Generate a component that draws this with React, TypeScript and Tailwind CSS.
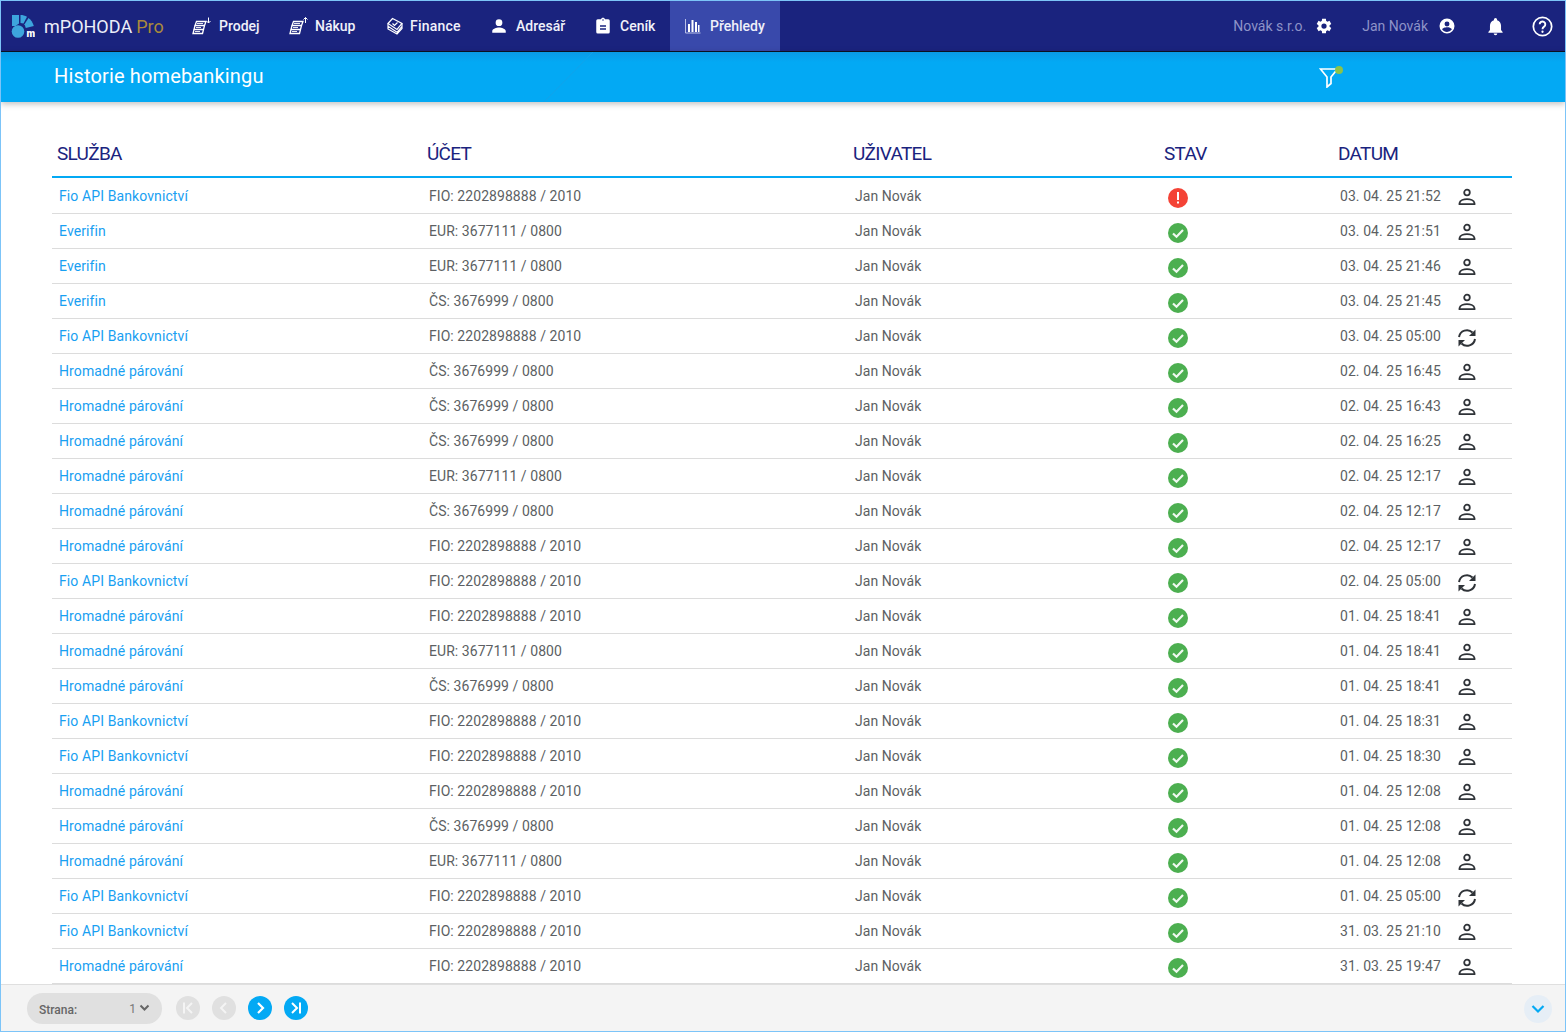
import React from "react";

type Row = [string, string, string, string];
const rows: Row[] = [
  ["Fio API Bankovnictví", "FIO: 2202898888 / 2010", "03. 04. 25 21:52", "eu"],
  ["Everifin", "EUR: 3677111 / 0800", "03. 04. 25 21:51", "ou"],
  ["Everifin", "EUR: 3677111 / 0800", "03. 04. 25 21:46", "ou"],
  ["Everifin", "ČS: 3676999 / 0800", "03. 04. 25 21:45", "ou"],
  ["Fio API Bankovnictví", "FIO: 2202898888 / 2010", "03. 04. 25 05:00", "os"],
  ["Hromadné párování", "ČS: 3676999 / 0800", "02. 04. 25 16:45", "ou"],
  ["Hromadné párování", "ČS: 3676999 / 0800", "02. 04. 25 16:43", "ou"],
  ["Hromadné párování", "ČS: 3676999 / 0800", "02. 04. 25 16:25", "ou"],
  ["Hromadné párování", "EUR: 3677111 / 0800", "02. 04. 25 12:17", "ou"],
  ["Hromadné párování", "ČS: 3676999 / 0800", "02. 04. 25 12:17", "ou"],
  ["Hromadné párování", "FIO: 2202898888 / 2010", "02. 04. 25 12:17", "ou"],
  ["Fio API Bankovnictví", "FIO: 2202898888 / 2010", "02. 04. 25 05:00", "os"],
  ["Hromadné párování", "FIO: 2202898888 / 2010", "01. 04. 25 18:41", "ou"],
  ["Hromadné párování", "EUR: 3677111 / 0800", "01. 04. 25 18:41", "ou"],
  ["Hromadné párování", "ČS: 3676999 / 0800", "01. 04. 25 18:41", "ou"],
  ["Fio API Bankovnictví", "FIO: 2202898888 / 2010", "01. 04. 25 18:31", "ou"],
  ["Fio API Bankovnictví", "FIO: 2202898888 / 2010", "01. 04. 25 18:30", "ou"],
  ["Hromadné párování", "FIO: 2202898888 / 2010", "01. 04. 25 12:08", "ou"],
  ["Hromadné párování", "ČS: 3676999 / 0800", "01. 04. 25 12:08", "ou"],
  ["Hromadné párování", "EUR: 3677111 / 0800", "01. 04. 25 12:08", "ou"],
  ["Fio API Bankovnictví", "FIO: 2202898888 / 2010", "01. 04. 25 05:00", "os"],
  ["Fio API Bankovnictví", "FIO: 2202898888 / 2010", "31. 03. 25 21:10", "ou"],
  ["Hromadné párování", "FIO: 2202898888 / 2010", "31. 03. 25 19:47", "ou"],
];

const Stack = ({ up }: { up?: boolean }) => (
  <svg width="22" height="22" viewBox="0 0 22 22" fill="none" stroke="#fff" strokeWidth="1.300">
    <path d="M4.500 6.500h9.500l-1.500 4H3zM3 10.500l-1 4h9.500l1-4M2 14.500l-1 4h9.500l1-4" />
    <path d="M5 8.500h6M4 12.500h5M3 16.500h5" strokeWidth=".9" />
    {up ? <path d="M16.500 8V2.500M14.500 4.500l2-2 2 2" strokeWidth="1" /> : <path d="M16.500 2.500V8M14.500 6l2 2 2-2" strokeWidth="1" />}
  </svg>
);

const Gem = () => (
  <svg width="16" height="18" viewBox="0 0 16 18" fill="none" stroke="#fff" strokeWidth="1.200">
    <path d="M1 6.500 5.500 1.500 15 6.500 10 12.500z" />
    <path d="M1 6.500v2.800l9 6 5-6V6.500M1 9.300V12l9 5 5-5.500V9.300" />
    <path d="m5.500 6.500 2 2 3-3" />
  </svg>
);

const Person = () => (
  <svg width="18" height="18" viewBox="0 0 24 24" fill="#fff"><path d="M12 12a4.500 4.500 0 1 0 0-9 4.500 4.500 0 0 0 0 9zm0 2c-3.200 0-9 1.600-9 4.800V21h18v-2.200c0-3.200-5.800-4.800-9-4.800z" /></svg>
);
const Clip = () => (
  <svg width="18" height="18" viewBox="0 0 24 24" fill="#fff"><path d="M19 3h-4.200C14.400 1.800 13.300 1 12 1s-2.400.8-2.800 2H5a2 2 0 0 0-2 2v15a2 2 0 0 0 2 2h14a2 2 0 0 0 2-2V5a2 2 0 0 0-2-2zm-7 0a1 1 0 1 1 0 2 1 1 0 0 1 0-2zm4 14H8v-2h8zm0-4H8v-2h8z" /></svg>
);
const Bars = () => (
  <svg width="16" height="16" viewBox="0 0 16 16" fill="none"><path d="M.5 1v14h15" stroke="#b9c0e6" strokeWidth="1" /><path d="M3 6h2v8H3zM6.500 2h2v12h-2zM10 4h2v10h-2zM13 7h1.500v7H13z" fill="#fff" /></svg>
);
const Gear = () => (
  <svg width="18" height="18" viewBox="0 0 24 24" fill="#fff"><path fillRule="evenodd" d="M19.400 13a7.800 7.800 0 0 0 0-2l2.300-1.700-2.400-4.200-2.700 1.100a7.600 7.600 0 0 0-1.700-1L14.500 2.300h-5L9 5.200a7.600 7.600 0 0 0-1.700 1L4.700 5.100 2.300 9.300 4.600 11a7.800 7.800 0 0 0 0 2l-2.300 1.700 2.400 4.200 2.700-1.100a7.600 7.600 0 0 0 1.700 1l.4 2.900h5l.4-2.900a7.600 7.600 0 0 0 1.700-1l2.700 1.100 2.400-4.200zM12 15.500a3.500 3.500 0 1 1 0-7 3.500 3.500 0 0 1 0 7z" /></svg>
);
const Account = () => (
  <svg width="18" height="18" viewBox="0 0 24 24" fill="#fff"><path fillRule="evenodd" d="M12 2a10 10 0 1 0 0 20 10 10 0 0 0 0-20zm0 4a3.300 3.300 0 1 1 0 6.600A3.300 3.300 0 0 1 12 6zm0 14c-2.600 0-5-1.300-6.400-3.300 0-2.100 4.300-3.200 6.400-3.200s6.400 1.100 6.400 3.200A7.800 7.800 0 0 1 12 20z" /></svg>
);
const Bell = () => (
  <svg width="19" height="19" viewBox="0 0 24 24" fill="#fff"><path d="M12 23a2.300 2.300 0 0 0 2.300-2.200H9.700A2.300 2.300 0 0 0 12 23zm7-6.500V11c0-3.400-1.800-6.200-5-7V3.300a2 2 0 0 0-4 0V4c-3.200.8-5 3.600-5 7v5.500L3 19v.8h18V19z" /></svg>
);
const Help = () => (
  <svg width="21" height="21" viewBox="0 0 24 24" fill="none" stroke="#fff" strokeWidth="2"><circle cx="12" cy="12" r="10.500" /><path d="M8.800 9.500a3.200 3.200 0 1 1 5 2.600c-1 .7-1.800 1.300-1.800 2.900" strokeWidth="2.200" /><circle cx="12" cy="18" r="1.300" fill="#fff" stroke="none" /></svg>
);
const Ok = () => (
  <svg width="20" height="20" viewBox="0 0 20 20"><circle cx="10" cy="10" r="10" fill="#4caf50" /><path d="m5 10.500 3.500 3.300L15 7" fill="none" stroke="#fff" strokeWidth="2.200" opacity=".92" /></svg>
);
const Err = () => (
  <svg width="20" height="20" viewBox="0 0 20 20"><circle cx="10" cy="10" r="10" fill="#f44336" /><path d="M9 4h2v8H9zM9 13.500h2v2H9z" fill="#fff" /></svg>
);
const UserOut = () => (
  <svg width="18" height="18" viewBox="0 0 18 18" fill="none" stroke="#2f3338" strokeWidth="1.800">
    <circle cx="9" cy="4.500" r="2.800" />
    <path d="M1.500 16.200v-1c.5-2.700 4.500-4 7.500-4s7 1.300 7.500 4v1z" />
  </svg>
);
const Sync = () => (
  <svg className="translate-y-[1px]" width="20" height="20" viewBox="0 0 20 20" fill="none" stroke="#2f3338" strokeWidth="2">
    <path d="M2 9A8 8 0 0 1 15.500 4.500" />
    <path d="M18.500 1.500v6.500H12z" fill="#2f3338" stroke="none" />
    <path d="M18 11A8 8 0 0 1 4.500 15.500" />
    <path d="M1.500 18.500V12H8z" fill="#2f3338" stroke="none" />
  </svg>
);
const Logo = () => (
  <svg width="24" height="23" viewBox="0 0 24 23" fill="#3da5dd">
    <path d="M1 0h7v8.500L4.500 11H1z" />
    <path d="M9.500 0c2.400 0 4.500.6 6.500 1.700L12.500 8.500 9.500 8z" />
    <path d="M17.500 3c2.500 1.800 4.200 4.400 5.300 8l-8 2-1.300-3.700z" />
    <circle cx="7" cy="16.500" r="6.300" />
    <text x="15.500" y="21.500" fill="#fff" fontSize="10" fontWeight="900" fontFamily="Roboto, sans-serif">m</text>
  </svg>
);

const FilterIcon = () => (
  <span className="relative inline-flex">
    <svg width="20" height="22" viewBox="0 0 20 22" fill="none" stroke="#fff" strokeWidth="1.700">
      <path d="M1.500 3h17L12 11v6.500L8 21v-10z" />
    </svg>
    <span className="absolute right-[-4px] top-0 h-[8px] w-[8px] rounded-full bg-[#8bc34a]" />
  </span>
);

const Nav = ({ icon, label, cls, active }: { icon: React.ReactNode; label: string; cls: string; active?: boolean }) => (
  <div className={`flex h-[50px] items-center ${cls} ${active ? "bg-[#3949ab]" : ""}`}>
    {icon}
    <span className="text-[14px] font-medium text-[#f0f1fa]">{label}</span>
  </div>
);

const cell = "text-[14px] tracking-[0.06px] text-[#5c5f63]";
const cols = "grid-cols-[370px_426px_311px_174px_1fr]";

export default function App() {
  return (
    <div className="flex h-[1032px] w-[1566px] flex-col overflow-hidden border border-[#7cc4f8] bg-white font-['Roboto',sans-serif]">
      <header className="flex h-[50px] shrink-0 items-center bg-[#1a237e]">
        <div className="flex w-[176px] items-center pl-[10px] pt-[1px]">
          <Logo />
          <span className="ml-[9px] text-[18px] text-[#eceef8]">mPOHODA</span>
          <span className="ml-[4px] text-[18px] text-[#a98a3c]">Pro</span>
        </div>
        <Nav icon={<Stack />} label="Prodej" cls="w-[97px] gap-[5px] pl-[15px]" />
        <Nav icon={<Stack up />} label="Nákup" cls="w-[98px] gap-[4px] pl-[15px]" />
        <Nav icon={<Gem />} label="Finance" cls="w-[105px] gap-[7px] pl-[15px] tracking-[0.2px]" />
        <Nav icon={<Person />} label="Adresář" cls="w-[104px] gap-[8px] pl-[13px]" />
        <Nav icon={<Clip />} label="Ceník" cls="w-[89px] gap-[8px] pl-[13px]" />
        <Nav icon={<Bars />} label="Přehledy" cls="w-[110px] gap-[9px] pl-[15px]" active />
        <div className="ml-auto flex items-center pr-[12px]">
          <span className="text-[14px] text-[#8e93c8]">Novák s.r.o.</span>
          <span className="ml-[9px] flex"><Gear /></span>
          <span className="ml-[29px] text-[14px] text-[#8e93c8]">Jan Novák</span>
          <span className="ml-[10px] flex"><Account /></span>
          <span className="ml-[30px] flex"><Bell /></span>
          <span className="ml-[27px] flex"><Help /></span>
        </div>
      </header>

      <div className="relative z-10 flex h-[51px] shrink-0 items-center border-t border-t-[#0b1020] bg-gradient-to-b from-[#0a9ae6] from-0% to-[#03a9f4] to-20% shadow-[0_2px_6px_rgba(0,0,0,0.25)]">
        <svg className="absolute left-[540px] top-0" width="56" height="50" viewBox="0 0 56 50"><path d="M52 0 3 50" stroke="#12a3ea" strokeWidth="1" fill="none" /></svg>
        <h1 className="ml-[53px] pb-[2px] text-[20px] font-normal tracking-[0.15px] text-white">Historie homebankingu</h1>
        <span className="ml-auto mr-[226px] flex"><FilterIcon /></span>
      </div>

      <main className="min-h-0 flex-1 overflow-hidden pl-[51px] pr-[53px] pt-[35px]">
        <div className={`grid h-[41px] ${cols} border-b-2 border-b-[#03a9f4] pl-[5px] text-[19px] leading-[33px] tracking-[-0.7px] text-[#1a237e]`}>
          <div>SLUŽBA</div>
          <div>ÚČET</div>
          <div>UŽIVATEL</div>
          <div>STAV</div>
          <div>DATUM</div>
        </div>
        <div className="pt-[1px]">
          {rows.map((r, i) => (
            <div key={i} className={`grid h-[35px] ${cols} items-center border-b border-b-[#dcdcdc] pl-[7px]`}>
              <span className="text-[14px] tracking-[0.1px] text-[#18a0f2]">{r[0]}</span>
              <span className={cell}>{r[1]}</span>
              <span className={cell}>Jan Novák</span>
              <span className="flex translate-y-[2px] pl-[2px]">{r[3][0] === "e" ? <Err /> : <Ok />}</span>
              <span className="flex items-center">
                <span className={`w-[117px] ${cell}`}>{r[2]}</span>
                <span className="flex w-[20px] translate-y-[1px] justify-center">{r[3][1] === "u" ? <UserOut /> : <Sync />}</span>
              </span>
            </div>
          ))}
        </div>
      </main>

      <footer className="flex h-[47px] shrink-0 items-center border-t border-t-[#dfdfdf] bg-[#f4f4f4] pl-[26px] pr-[13px]">
        <div className="flex h-[31px] w-[135px] items-center rounded-full bg-[#e0e0e0] pl-[12px] pr-[12px]">
          <span className="pt-[3px] text-[12px] font-medium text-[#666666]">Strana:</span>
          <span className="ml-auto pt-[2px] text-[12px] text-[#777777]">1</span>
          <svg className="ml-[3px]" width="11" height="8" viewBox="0 0 11 8" fill="none" stroke="#666" strokeWidth="2"><path d="m1.500 1.500 4 4 4-4" /></svg>
        </div>
        <button className="ml-[14px] flex h-[24px] w-[24px] items-center justify-center rounded-full bg-[#e0e0e0]">
          <svg width="14" height="14" viewBox="0 0 14 14" fill="none" stroke="#f4f4f4" strokeWidth="2"><path d="M3 1.500v11M11 2 6 7l5 5" /></svg>
        </button>
        <button className="ml-[12px] flex h-[24px] w-[24px] items-center justify-center rounded-full bg-[#e0e0e0]">
          <svg width="14" height="14" viewBox="0 0 14 14" fill="none" stroke="#f4f4f4" strokeWidth="2"><path d="M9 2 4 7l5 5" /></svg>
        </button>
        <button className="ml-[12px] flex h-[24px] w-[24px] items-center justify-center rounded-full bg-[#03a9f4]">
          <svg width="14" height="14" viewBox="0 0 14 14" fill="none" stroke="#fff" strokeWidth="2.200"><path d="m5 2 5 5-5 5" /></svg>
        </button>
        <button className="ml-[12px] flex h-[24px] w-[24px] items-center justify-center rounded-full bg-[#03a9f4]">
          <svg width="14" height="14" viewBox="0 0 14 14" fill="none" stroke="#fff" strokeWidth="2"><path d="m3 2 5 5-5 5M11 1.500v11" /></svg>
        </button>
        <button className="ml-auto mt-[2px] flex h-[28px] w-[28px] items-center justify-center rounded-full bg-[#e6eef6]">
          <svg width="14" height="10" viewBox="0 0 14 10" fill="none" stroke="#03a9f4" strokeWidth="2.200"><path d="m1.500 2 5.500 5.500L12.500 2" /></svg>
        </button>
      </footer>
    </div>
  );
}
